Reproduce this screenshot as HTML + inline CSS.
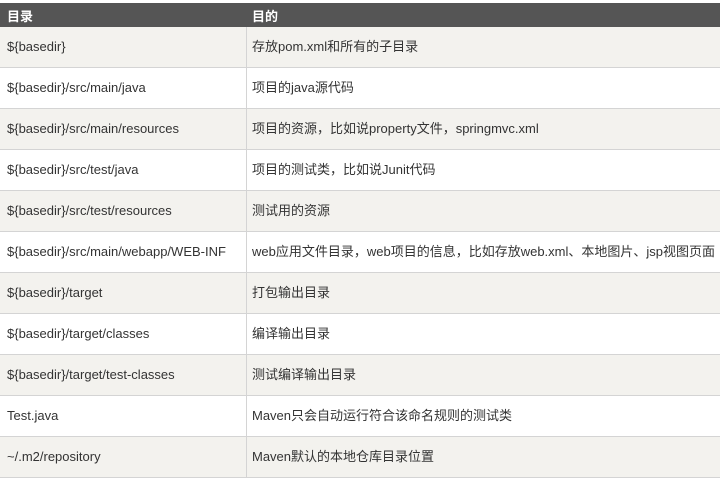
<!DOCTYPE html>
<html><head><meta charset="utf-8"><style>
body{margin:0;width:720px;height:467px;overflow:hidden;background:#fff;font-family:"Liberation Sans","Noto Sans CJK SC",sans-serif;font-size:13px;color:#333}
.h{position:absolute;left:0;top:3px;width:720px;height:24px;background:#555;color:#fff;font-weight:bold}
.r{position:absolute;left:0;width:720px;height:40px;border-bottom:1px solid #d4d4d4}
.c1,.c2{position:absolute;top:0;height:100%;display:flex;align-items:center}
.c1{left:7px;top:-1px}
.c2{left:252px;top:-2px}
.h .c2,.h .c1{top:0}
.r .c2::before{content:"";position:absolute;left:-6px;top:2px;height:41px;border-left:1px solid #d4d4d4}
.g{background:#f3f2ee}
</style></head><body>
<div class="h"><span class="c1">目录</span><span class="c2">目的</span></div>
<div class="r g" style="top:27px"><span class="c1">${basedir}</span><span class="c2">存放pom.xml和所有的子目录</span></div>
<div class="r" style="top:68px"><span class="c1">${basedir}/src/main/java</span><span class="c2">项目的java源代码</span></div>
<div class="r g" style="top:109px"><span class="c1">${basedir}/src/main/resources</span><span class="c2">项目的资源，比如说property文件，springmvc.xml</span></div>
<div class="r" style="top:150px"><span class="c1">${basedir}/src/test/java</span><span class="c2">项目的测试类，比如说Junit代码</span></div>
<div class="r g" style="top:191px"><span class="c1">${basedir}/src/test/resources</span><span class="c2">测试用的资源</span></div>
<div class="r" style="top:232px"><span class="c1">${basedir}/src/main/webapp/WEB-INF</span><span class="c2">web应用文件目录，web项目的信息，比如存放web.xml、本地图片、jsp视图页面</span></div>
<div class="r g" style="top:273px"><span class="c1">${basedir}/target</span><span class="c2">打包输出目录</span></div>
<div class="r" style="top:314px"><span class="c1">${basedir}/target/classes</span><span class="c2">编译输出目录</span></div>
<div class="r g" style="top:355px"><span class="c1">${basedir}/target/test-classes</span><span class="c2">测试编译输出目录</span></div>
<div class="r" style="top:396px"><span class="c1">Test.java</span><span class="c2">Maven只会自动运行符合该命名规则的测试类</span></div>
<div class="r g" style="top:437px"><span class="c1">~/.m2/repository</span><span class="c2">Maven默认的本地仓库目录位置</span></div>
</body></html>
